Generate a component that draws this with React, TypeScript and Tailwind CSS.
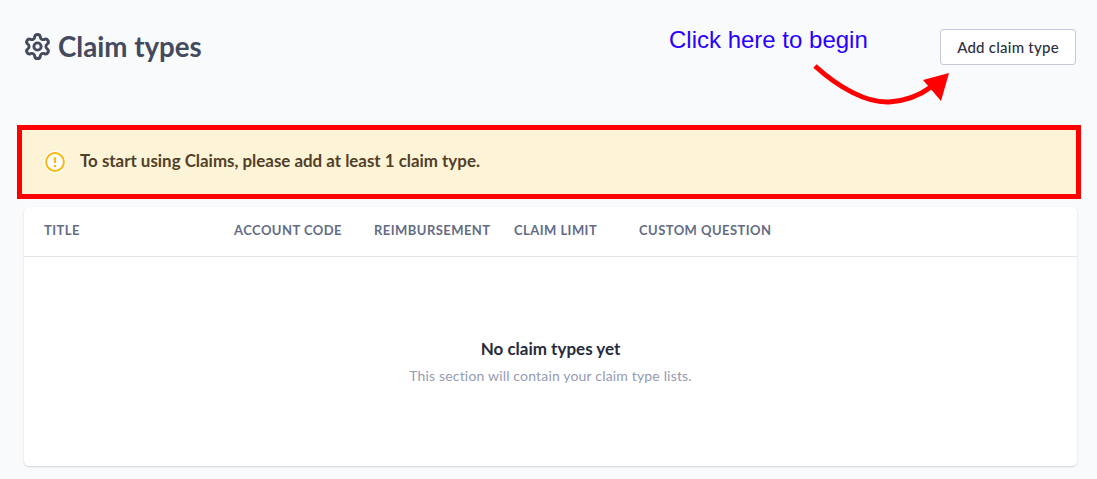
import { Settings } from "lucide-react";

const cols = [
  { label: "TITLE", w: "w-[190px]" },
  { label: "ACCOUNT CODE", w: "w-[140px]" },
  { label: "REIMBURSEMENT", w: "w-[140px]" },
  { label: "CLAIM LIMIT", w: "w-[125px]" },
  { label: "CUSTOM QUESTION", w: "" },
];

export default function App() {
  return (
    <div className="h-[479px] overflow-hidden bg-[#f9fafc] pl-6 pr-5 font-['Lato','Noto_Sans',sans-serif]">
      <header className="relative flex h-[125px] items-start justify-between">
        <div className="mt-[28px] -ml-px flex items-center gap-[6px] text-[#444a5e]">
          <Settings size={29} strokeWidth={2.4} />
          <h1 className="mt-[2px] text-[27.7px] leading-[34px] font-bold">Claim types</h1>
        </div>
        <button className="mt-[29px] mr-px h-9 w-[136px] rounded-[3px] border border-[#c3c9da] bg-white text-[15px] font-medium tracking-[0.24px] text-[#2b2f40]">
          Add claim type
        </button>
        <span className="absolute top-[25px] left-[645px] font-['Liberation_Sans',sans-serif] text-[24px] leading-[30px] text-[#2a00ff]">
          Click here to begin
        </span>
        <svg className="absolute top-[60px] left-[785px]" width="150" height="50" viewBox="0 0 150 50" fill="none">
          <path d="M6 6 C30 28 58 43 80 42 C96 41 110 36 122 27" stroke="#ff0000" stroke-width="5" />
          <path d="M140 13 L114 20 L132 41 Z" fill="#ff0000" />
        </svg>
      </header>
      <div className="-mx-[7px] mr-[-4px] border-[5px] border-[#ff0000]">
        <div className="flex h-16 items-center gap-[14px] bg-[#fdf3d7] pl-[22px]">
          <svg width="22" height="22" viewBox="0 0 22 22" fill="none">
            <circle cx="11" cy="11" r="11" fill="#fff" />
            <circle cx="11" cy="11" r="8.9" stroke="#fbb80f" stroke-width="2" />
            <path d="M11 6.2V12" stroke="#fbb80f" stroke-width="2.2" />
            <circle cx="11" cy="15" r="1.3" fill="#fbb80f" />
          </svg>
          <p className="-mt-[2px] text-[16.9px] font-bold text-[#523f27]">To start using Claims, please add at least 1 claim type.</p>
        </div>
      </div>
      <section className="mt-2 h-[259px] rounded-[5px] bg-white shadow-[0_1px_2px_rgba(50,60,90,0.2)]">
        <div className="flex h-[50px] items-center border-b border-[#e4e6eb] pl-5 text-[13px] font-bold tracking-[0.45px] text-[#646c85]">
          {cols.map((c) => (
            <div key={c.label} className={`-mt-[2px] ${c.w}`}>{c.label}</div>
          ))}
        </div>
        <div className="flex flex-col items-center pt-[82px]">
          <h2 className="text-[17px] leading-5 font-bold text-[#272b3c]">No claim types yet</h2>
          <p className="mt-[7px] text-[14px] leading-5 tracking-[0.17px] text-[#959bb0]">This section will contain your claim type lists.</p>
        </div>
      </section>
    </div>
  );
}
